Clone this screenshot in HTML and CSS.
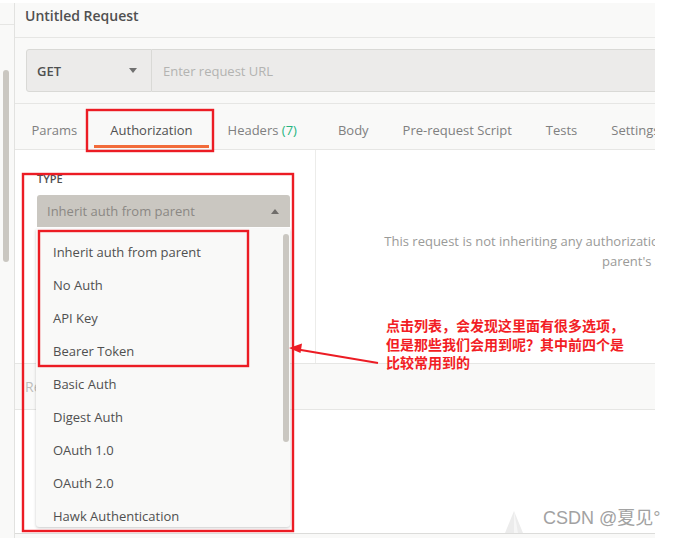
FILE: index.html
```html
<!DOCTYPE html>
<html lang="zh-CN">
<head>
<meta charset="utf-8">
<title>Untitled Request</title>
<link rel="stylesheet" href="styles.css">
</head>
<body>
<div class="frame">
  <aside class="sidebar">
    <div class="sb-top"></div>
    <div class="sb-thumb"></div>
  </aside>
  <main class="main">
    <header class="title-bar">Untitled Request</header>
    <div class="url-row">
      <div class="method">GET<span class="caret-down"></span></div>
      <div class="url">Enter request URL</div>
    </div>
    <nav class="tabs">
      <span class="tab">Params</span>
      <span class="tab active">Authorization</span>
      <span class="tab tab-headers">Headers <span class="count">(7)</span></span>
      <span class="tab tab-wide">Body</span>
      <span class="tab tab-wide">Pre-request Script</span>
      <span class="tab tab-wide">Tests</span>
      <span class="tab tab-wide">Settings</span>
    </nav>
    <section class="auth">
      <div class="auth-left">
        <div class="type-label">TYPE</div>
        <div class="select">Inherit auth from parent<span class="caret-up"></span></div>
      </div>
      <div class="auth-right">
        <p class="auth-msg">This request is not inheriting any authorization helper at the moment. Save it in a collection to use the<br>parent's authorization helper.</p>
      </div>
    </section>
    <section class="response">Response</section>
    <div class="resp-body">
      <svg class="ghost" width="18" height="22" viewBox="0 0 18 22"><path d="M9 0 L18 22 L0 22 Z" fill="#ececec"/><path d="M9 0 L13 22 L9 22 Z" fill="#f6f6f6"/></svg>
    </div>
    <footer class="bottom-bar"></footer>
  </main>
  <ul class="menu">
    <li>Inherit auth from parent</li>
    <li>No Auth</li>
    <li>API Key</li>
    <li>Bearer Token</li>
    <li>Basic Auth</li>
    <li>Digest Auth</li>
    <li>OAuth 1.0</li>
    <li>OAuth 2.0</li>
    <li>Hawk Authentication</li>
    <li>AWS Signature</li>
    <li class="thumb" aria-hidden="true"></li>
  </ul>
</div>
<svg class="marks" width="677" height="538" viewBox="0 0 677 538">
  <rect x="87" y="110" width="126" height="41" fill="none" stroke="#ec1c24" stroke-width="2.4"/>
  <rect x="23" y="174" width="270" height="357" fill="none" stroke="#ec1c24" stroke-width="2.4"/>
  <rect x="39" y="231" width="209" height="135" fill="none" stroke="#ec1c24" stroke-width="2.4"/>
  <line x1="378" y1="363" x2="298" y2="349.4" stroke="#ec1c24" stroke-width="2"/>
  <polygon points="289,348 302,343.5 300.5,353" fill="#ec1c24"/>
</svg>
<div class="note">点击列表，会发现这里面有很多选项，<br>但是那些我们会用到呢？其中前四个是<br>比较常用到的</div>
<div class="watermark">CSDN @夏见°</div>
</body>
</html>
```
FILE: styles.css
```css
html, body {
  margin: 0;
  padding: 0;
  background: #ffffff;
}
body {
  position: relative;
  width: 677px;
  height: 538px;
  overflow: hidden;
  font-family: "Open Sans", "Noto Sans", sans-serif;
  font-size: 13px;
  color: #505050;
}
.frame {
  position: relative;
  margin-top: 3px;
  width: 655px;
  height: 535px;
  display: flex;
  background: #f9f9f8;
  overflow: hidden;
}
.sidebar {
  width: 14px;
  flex: 0 0 14px;
  border-right: 1px solid #e2e2e0;
  background: #f9f9f8;
}
.sb-top {
  height: 21px;
  border-bottom: 1px solid #e6e6e4;
}
.sb-thumb {
  margin: 45px 0 0 3px;
  width: 6px;
  height: 192px;
  border-radius: 3px;
  background: #cac7c1;
}
.main {
  flex: 1;
  min-width: 0;
  display: flex;
  flex-direction: column;
  overflow: hidden;
}
.title-bar {
  height: 34px;
  flex: 0 0 34px;
  box-sizing: content-box;
  line-height: 26px;
  padding-left: 10px;
  border-bottom: 1px solid #e6e6e4;
  font-size: 14px;
  font-weight: 600;
  color: #505050;
}
.url-row {
  height: 66px;
  flex: 0 0 66px;
  box-sizing: border-box;
  padding: 11px 0 0 11px;
  border-bottom: 1px solid #e6e6e4;
  display: flex;
}
.method {
  width: 126px;
  height: 43px;
  box-sizing: border-box;
  border: 1px solid #d9d9d6;
  border-radius: 3px 0 0 3px;
  background: #ecebea;
  display: flex;
  align-items: center;
  justify-content: space-between;
  padding: 0 14px 0 10px;
  font-weight: 600;
  color: #505050;
}
.caret-down {
  width: 0;
  height: 0;
  border-left: 4px solid transparent;
  border-right: 4px solid transparent;
  border-top: 5px solid #707070;
}
.url {
  flex: 1;
  height: 43px;
  box-sizing: border-box;
  border: 1px solid #d9d9d6;
  border-left: none;
  border-right: none;
  background: #ecebea;
  display: flex;
  align-items: center;
  padding-left: 11px;
  color: #b3b3b1;
}
.tabs {
  height: 45px;
  flex: 0 0 45px;
  box-sizing: content-box;
  border-bottom: 1px solid #e6e6e4;
  display: flex;
  align-items: flex-start;
  white-space: nowrap;
}
.tab {
  padding: 17px 16.5px 6px;
  line-height: 18px;
  border-bottom: 3px solid transparent;
  color: #808080;
}
.tab.tab-headers {
  padding-left: 18.5px;
  padding-right: 24px;
}
.tab.tab-wide {
  padding-left: 17px;
  padding-right: 17px;
}
.tab.active {
  color: #505050;
  border-bottom-color: #f26b3a;
}
.count {
  color: #26b47f;
}
.auth {
  height: 213px;
  flex: 0 0 213px;
  display: flex;
  background: #ffffff;
  overflow: hidden;
}
.auth-left {
  flex: 0 0 301px;
  box-sizing: border-box;
  border-right: 1px solid #ececea;
  padding: 21px 0 0 22px;
}
.type-label {
  line-height: 16px;
  font-size: 11px;
  font-weight: 600;
  color: #505050;
}
.select {
  margin-top: 8px;
  width: 253px;
  height: 32px;
  box-sizing: border-box;
  border-radius: 3px 3px 0 0;
  background: #cac7c1;
  color: #8a8884;
  display: flex;
  align-items: center;
  justify-content: space-between;
  padding: 0 11px 0 10px;
}
.caret-up {
  width: 0;
  height: 0;
  border-left: 4px solid transparent;
  border-right: 4px solid transparent;
  border-bottom: 5px solid #6f6d6a;
}
.auth-right {
  flex: 0 0 752px;
  text-align: center;
}
.auth-msg {
  margin: 81px 0 0;
  line-height: 20px;
  color: #9a9a98;
  white-space: nowrap;
}
.response {
  height: 45px;
  flex: 0 0 45px;
  box-sizing: content-box;
  border-top: 1px solid #e6e6e4;
  border-bottom: 1px solid #e6e6e4;
  background: #f9f9f8;
  line-height: 45px;
  padding-left: 10px;
  font-size: 14px;
  color: #bdbdbb;
}
.resp-body {
  flex: 1;
  background: #ffffff;
  display: flex;
  align-items: flex-end;
  padding-left: 490px;
}
.ghost {
  display: block;
}
.bottom-bar {
  height: 4px;
  flex: 0 0 4px;
  border-top: 1px solid #dcdcda;
  background: #f9f9f8;
}
.menu {
  position: absolute;
  left: 36px;
  top: 226px;
  width: 254px;
  height: 298px;
  box-sizing: border-box;
  margin: 0;
  padding: 7px 0 0;
  list-style: none;
  background: #f9f9f8;
  border-radius: 0 0 3px 3px;
  box-shadow: 0 1px 3px rgba(0, 0, 0, 0.22);
  overflow: hidden;
}
.menu li {
  height: 33px;
  line-height: 33px;
  padding-left: 17px;
  color: #505050;
  white-space: nowrap;
}
.menu li.thumb {
  position: absolute;
  right: 1px;
  top: 5px;
  width: 6px;
  height: 208px;
  padding: 0;
  border-radius: 3px;
  background: #cac7c1;
}
.marks {
  position: absolute;
  left: 0;
  top: 0;
  pointer-events: none;
}
.note {
  position: absolute;
  left: 386px;
  top: 316px;
  font-family: "Noto Sans CJK SC", sans-serif;
  font-size: 14px;
  font-weight: 700;
  line-height: 18.5px;
  color: #f21d24;
  white-space: nowrap;
}
.watermark {
  position: absolute;
  left: 543px;
  top: 507px;
  font-family: "Liberation Sans", "Noto Sans CJK SC", sans-serif;
  font-size: 18px;
  line-height: 22px;
  color: #a2a2a2;
  text-shadow: 0 0 1px #ffffff;
  white-space: nowrap;
}
```
